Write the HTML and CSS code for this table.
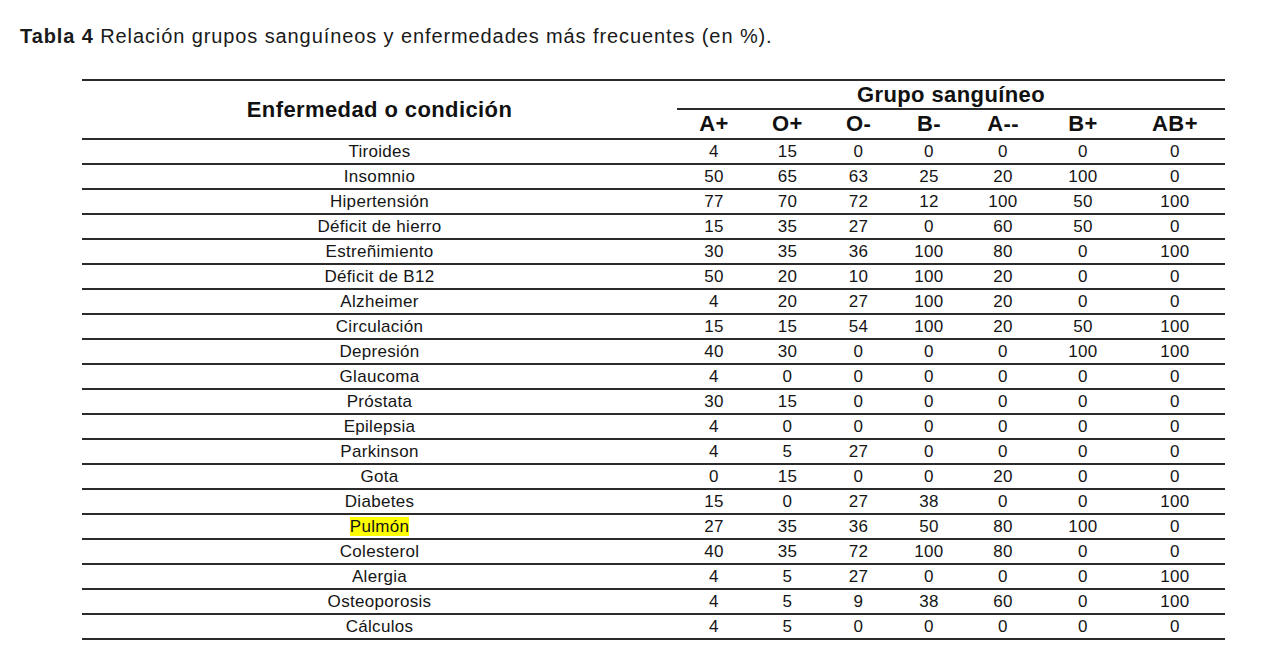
FILE: index.html
```html
<!DOCTYPE html>
<html lang="es">
<head>
<meta charset="utf-8">
<title>Tabla 4</title>
<link rel="stylesheet" href="styles.css">
</head>
<body>
<p class="caption"><b>Tabla 4</b> Relación grupos sanguíneos y enfermedades más frecuentes (en %).</p>
<table class="data">
  <colgroup>
    <col class="c-name">
    <col class="c1"><col class="c2"><col class="c3"><col class="c4"><col class="c5"><col class="c6"><col class="c7">
  </colgroup>
  <thead>
    <tr class="h1">
      <th rowspan="2" class="name-h">Enfermedad o condición</th>
      <th colspan="7" class="group-h">Grupo sanguíneo</th>
    </tr>
    <tr class="h2">
      <th>A+</th><th>O+</th><th>O-</th><th>B-</th><th>A--</th><th>B+</th><th>AB+</th>
    </tr>
  </thead>
  <tbody>
    <tr><td>Tiroides</td><td>4</td><td>15</td><td>0</td><td>0</td><td>0</td><td>0</td><td>0</td></tr>
    <tr><td>Insomnio</td><td>50</td><td>65</td><td>63</td><td>25</td><td>20</td><td>100</td><td>0</td></tr>
    <tr><td>Hipertensión</td><td>77</td><td>70</td><td>72</td><td>12</td><td>100</td><td>50</td><td>100</td></tr>
    <tr><td>Déficit de hierro</td><td>15</td><td>35</td><td>27</td><td>0</td><td>60</td><td>50</td><td>0</td></tr>
    <tr><td>Estreñimiento</td><td>30</td><td>35</td><td>36</td><td>100</td><td>80</td><td>0</td><td>100</td></tr>
    <tr><td>Déficit de B12</td><td>50</td><td>20</td><td>10</td><td>100</td><td>20</td><td>0</td><td>0</td></tr>
    <tr><td>Alzheimer</td><td>4</td><td>20</td><td>27</td><td>100</td><td>20</td><td>0</td><td>0</td></tr>
    <tr><td>Circulación</td><td>15</td><td>15</td><td>54</td><td>100</td><td>20</td><td>50</td><td>100</td></tr>
    <tr><td>Depresión</td><td>40</td><td>30</td><td>0</td><td>0</td><td>0</td><td>100</td><td>100</td></tr>
    <tr><td>Glaucoma</td><td>4</td><td>0</td><td>0</td><td>0</td><td>0</td><td>0</td><td>0</td></tr>
    <tr><td>Próstata</td><td>30</td><td>15</td><td>0</td><td>0</td><td>0</td><td>0</td><td>0</td></tr>
    <tr><td>Epilepsia</td><td>4</td><td>0</td><td>0</td><td>0</td><td>0</td><td>0</td><td>0</td></tr>
    <tr><td>Parkinson</td><td>4</td><td>5</td><td>27</td><td>0</td><td>0</td><td>0</td><td>0</td></tr>
    <tr><td>Gota</td><td>0</td><td>15</td><td>0</td><td>0</td><td>20</td><td>0</td><td>0</td></tr>
    <tr><td>Diabetes</td><td>15</td><td>0</td><td>27</td><td>38</td><td>0</td><td>0</td><td>100</td></tr>
    <tr><td><span class="hl">Pulmón</span></td><td>27</td><td>35</td><td>36</td><td>50</td><td>80</td><td>100</td><td>0</td></tr>
    <tr><td>Colesterol</td><td>40</td><td>35</td><td>72</td><td>100</td><td>80</td><td>0</td><td>0</td></tr>
    <tr><td>Alergia</td><td>4</td><td>5</td><td>27</td><td>0</td><td>0</td><td>0</td><td>100</td></tr>
    <tr><td>Osteoporosis</td><td>4</td><td>5</td><td>9</td><td>38</td><td>60</td><td>0</td><td>100</td></tr>
    <tr><td>Cálculos</td><td>4</td><td>5</td><td>0</td><td>0</td><td>0</td><td>0</td><td>0</td></tr>
  </tbody>
</table>
</body>
</html>
```

FILE: styles.css
```css
html, body {
  margin: 0;
  padding: 0;
  background: #ffffff;
}

body {
  font-family: "Liberation Sans", Arial, sans-serif;
  color: #111111;
}

.caption {
  margin: 26px 0 0 20px;
  font-size: 20px;
  line-height: 20px;
  letter-spacing: 0.9px;
  color: #1a1a1a;
}

.caption b {
  font-weight: bold;
}

.data {
  margin: 33px 0 0 82px;
  width: 1143px;
  table-layout: fixed;
  border-collapse: separate;
  border-spacing: 0;
  border-top: 2px solid #2b2b2b;
}

.c-name { width: 595px; }
.c1 { width: 74px; }
.c2 { width: 73px; }
.c3 { width: 69px; }
.c4 { width: 72px; }
.c5 { width: 76px; }
.c6 { width: 84px; }
.c7 { width: 100px; }

.data th {
  font-size: 22px;
  font-weight: bold;
  letter-spacing: 0.4px;
  color: #111111;
  padding: 0;
  text-align: center;
  border-bottom: 2px solid #2b2b2b;
}

.data .h1 th {
  height: 27px;
  line-height: 27px;
}

.data .h1 th.name-h {
  height: auto;
  line-height: 26px;
  vertical-align: middle;
}

.data .h2 th {
  height: 28px;
  line-height: 28px;
}

.data td {
  font-size: 17px;
  letter-spacing: 0.3px;
  height: 23px;
  line-height: 23px;
  padding: 0;
  text-align: center;
  border-bottom: 2px solid #2b2b2b;
  color: #151515;
}

.hl {
  background: #ffff00;
}
```
